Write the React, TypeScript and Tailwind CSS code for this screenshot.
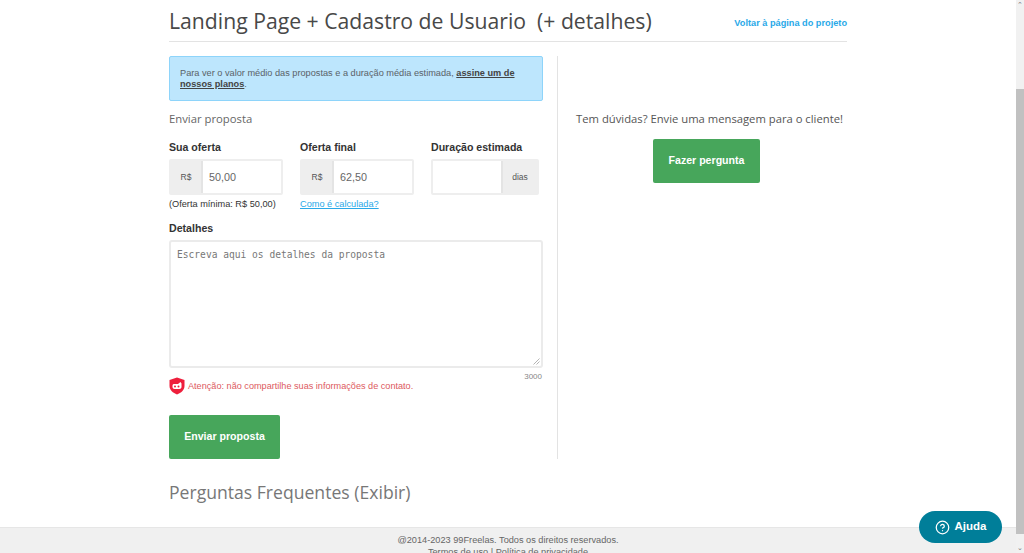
import { CircleHelp } from 'lucide-react';

const arial = "font-['Liberation_Sans',Arial,sans-serif]";
const openSans = "font-['Open_Sans',sans-serif]";

function PriceField({ label, value, hint, hintLink }: { label: string; value: string; hint: string; hintLink?: boolean }) {
  return (
    <div className="w-[114px]">
      <div className="h-[15px] text-[10.6px] leading-[15px] font-bold text-[#333]">{label}</div>
      <div className="mt-[4px] flex h-[36px] rounded-[2px] border-2 border-[#eeeeee]">
        <div className="flex w-[32px] items-center justify-center border-r-2 border-[#e4e4e4] bg-[#eeeeee] text-[8.5px] text-[#555]">R$</div>
        <div className="flex-1 pl-[6px] text-[10.8px] leading-[32px] text-[#666]">{value}</div>
      </div>
      <div className={hintLink ? 'mt-[2px] whitespace-nowrap text-[9.2px] leading-[14px] text-[#29a9e8] underline' : 'mt-[2px] whitespace-nowrap text-[9.2px] leading-[14px] text-[#333]'}>
        {hint}
      </div>
    </div>
  );
}

function ShieldIcon() {
  return (
    <svg width="16" height="18" viewBox="0 0 16 18" className="shrink-0">
      <path d="M8 0.5 L15.5 3 V9 C15.5 13 12 16 8 17.5 C4 16 0.5 13 0.5 9 V3 Z" fill="#ee1f3c" />
      <path d="M3.5 8.5 C3.5 7.3 4.6 7 5.5 7 H9 L11.5 5 L12.5 6.5 V10 C12.5 11.3 11.5 12 10.5 12 H5.5 C4.4 12 3.5 11.3 3.5 10 Z" fill="#fff" />
      <circle cx="6" cy="9.5" r="1" fill="#ee1f3c" />
      <circle cx="9.5" cy="9.5" r="1" fill="#ee1f3c" />
    </svg>
  );
}

export default function App() {
  return (
    <div className={`flex h-[553px] w-[1024px] overflow-hidden bg-white ${arial}`}>
      <div className="relative flex w-[1016px] flex-col">
        <div className="ml-[169px] w-[678px] flex-1">
          <div className="flex h-[42px] items-start justify-between border-b border-[#e3e3e3]">
            <h1 className={`whitespace-pre text-[21.2px] leading-[42px] text-[#484848] ${openSans}`}>
              {'Landing Page + Cadastro de Usuario  (+ detalhes)'}
            </h1>
            <a className="mt-[16px] text-[9.2px] leading-[14px] font-bold text-[#29a9e8]">Voltar à página do projeto</a>
          </div>

          <div className="mt-[14px] flex">
            <div className="w-[374px]">
              <div className="h-[45px] rounded-[2px] border border-[#8ed4fa] bg-[#bde6fd] pl-[10px] pr-[20px] pt-[11px] text-[9.2px] leading-[11px] text-[#5a6268]">
                Para ver o valor médio das propostas e a duração média estimada,{' '}
                <a className="font-bold text-[#444] underline">assine um de nossos planos</a>.
              </div>

              <div className={`mt-[9px] text-[11.3px] leading-[17px] text-[#666] ${openSans}`}>Enviar proposta</div>

              <div className="mt-[13px] flex gap-[17px]">
                <PriceField label="Sua oferta" value="50,00" hint="(Oferta mínima: R$ 50,00)" />
                <PriceField label="Oferta final" value="62,50" hint="Como é calculada?" hintLink />
                <div className="w-[108px]">
                  <div className="h-[15px] text-[10.6px] leading-[15px] font-bold text-[#333]">Duração estimada</div>
                  <div className="mt-[4px] flex h-[36px] rounded-[2px] border-2 border-[#eeeeee]">
                    <div className="flex-1" />
                    <div className="flex w-[36px] items-center justify-center border-l-2 border-[#e4e4e4] bg-[#eeeeee] text-[8.5px] text-[#555]">dias</div>
                  </div>
                </div>
              </div>

              <div className="mt-[10px] text-[10.6px] leading-[15px] font-bold text-[#333]">Detalhes</div>
              <div className="relative mt-[4px]">
                <textarea
                  className="block h-[128px] w-[374px] resize-none rounded-[3px] border-2 border-[#ebebeb] px-[6px] py-[5px] font-['DejaVu_Sans_Mono',monospace] text-[9.6px] leading-[15px] text-[#666] placeholder:text-[#777]"
                  placeholder="Escreva aqui os detalhes da proposta"
                />
                <svg width="7" height="7" viewBox="0 0 7 7" className="absolute right-[3px] bottom-[3px]">
                  <path d="M0.5 6.5 L6.5 0.5 M3.5 6.5 L6.5 3.5" stroke="#b5b5b5" strokeWidth="1" />
                </svg>
              </div>
              <div className="mt-[4px] pr-[1px] text-right text-[8px] leading-[10px] text-[#888]">3000</div>

              <div className="-mt-[5px] flex items-center gap-[3px]">
                <ShieldIcon />
                <span className="mt-[2px] text-[9.15px] text-[#dd5a60]">Atenção: não compartilhe suas informações de contato.</span>
              </div>

              <button className="mt-[20px] block h-[44px] w-[111px] rounded-[2px] bg-[#47a65b] text-[10.6px] font-bold text-white">
                Enviar proposta
              </button>
            </div>

            <div className="ml-[14px] flex-1 border-l border-[#e3e3e3]">
              <div className={`mt-[54px] pl-[14px] text-center text-[11.25px] leading-[17px] text-[#555] ${openSans}`}>
                Tem dúvidas? Envie uma mensagem para o cliente!
              </div>
              <button className="mt-[12px] ml-[95px] block h-[44px] w-[107px] rounded-[2px] bg-[#47a65b] text-[10.6px] font-bold text-white">
                Fazer pergunta
              </button>
            </div>
          </div>

          <h2 className={`mt-[21px] text-[17.6px] leading-[24px] text-[#777] ${openSans}`}>Perguntas Frequentes (Exibir)</h2>
        </div>

        <footer className="h-[26px] shrink-0 overflow-hidden border-t border-[#e6e6e6] bg-[#f0f0f0] pt-[6px] text-center text-[9.2px] leading-[12px] text-[#666]">
          <div>@2014-2023 99Freelas. Todos os direitos reservados.</div>
          <div>Termos de uso | Política de privacidade</div>
        </footer>

        <button className="absolute left-[919px] top-[511px] flex h-[32px] w-[83px] items-center justify-center gap-[5px] rounded-full bg-[#007e99] text-[11.5px] font-bold text-white">
          <CircleHelp size={15} strokeWidth={2} />
          Ajuda
        </button>
      </div>

      <div className="flex w-[8px] flex-col bg-[#f1f1f1]">
        <div className="flex h-[89px] items-start justify-center pt-[1px] text-[7px] leading-[8px] text-[#777]">⌃</div>
        <div className="h-[445px] bg-[#c1c1c1]" />
        <div className="flex flex-1 items-end justify-center pb-[1px] text-[7px] leading-[8px] text-[#777]">⌄</div>
      </div>
    </div>
  );
}
